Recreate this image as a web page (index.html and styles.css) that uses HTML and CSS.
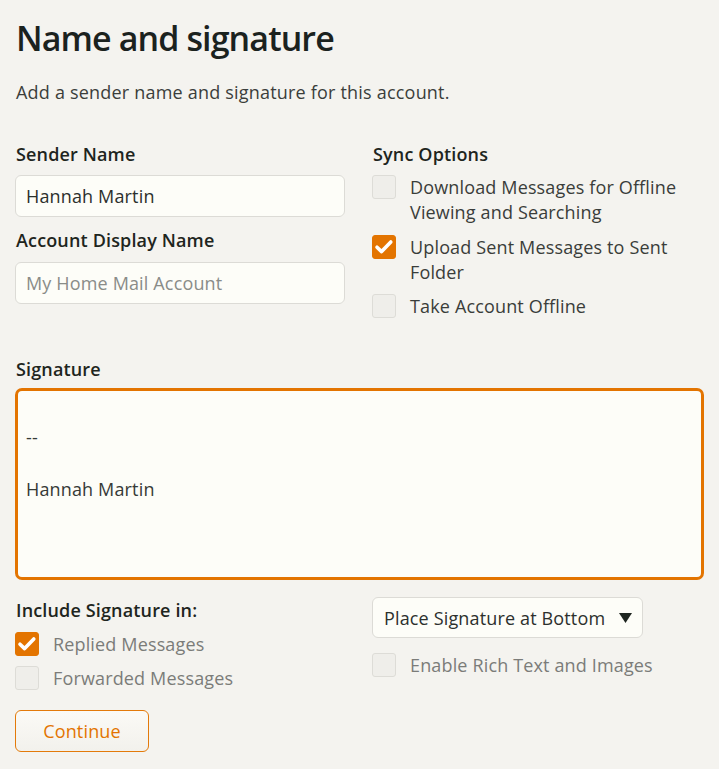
FILE: index.html
```html
<!DOCTYPE html>
<html lang="en">
<head>
<meta charset="utf-8">
<title>Name and signature</title>
<link rel="stylesheet" href="styles.css">
</head>
<body>
<main class="page">
  <h1 class="title">Name and signature</h1>
  <p class="subtitle">Add a sender name and signature for this account.</p>

  <div class="grid top-grid">
    <div class="col">
      <div class="label">Sender Name</div>
      <div class="input">Hannah Martin</div>
      <div class="label label-second">Account Display Name</div>
      <div class="input placeholder">My Home Mail Account</div>
    </div>
    <div class="col">
      <div class="label">Sync Options</div>
      <ul class="checks">
        <li class="check"><span class="box"></span><span class="check-text">Download Messages for Offline Viewing and Searching</span></li>
        <li class="check"><span class="box checked"><svg viewBox="0 0 24 24" width="24" height="24"><path d="M5 12.2 L9.6 16.6 L18.8 7" fill="none" stroke="#fff" stroke-width="3.6" stroke-linecap="round" stroke-linejoin="round"/></svg></span><span class="check-text">Upload Sent Messages to Sent Folder</span></li>
        <li class="check"><span class="box"></span><span class="check-text">Take Account Offline</span></li>
      </ul>
    </div>
  </div>

  <div class="label sig-label">Signature</div>
  <div class="textarea">
    <div class="line">&nbsp;</div>
    <div class="line">--</div>
    <div class="line">&nbsp;</div>
    <div class="line">Hannah Martin</div>
  </div>

  <div class="grid bottom-grid">
    <div class="col">
      <div class="label">Include Signature in:</div>
      <ul class="checks checks-muted">
        <li class="check"><span class="box checked"><svg viewBox="0 0 24 24" width="24" height="24"><path d="M5 12.2 L9.6 16.6 L18.8 7" fill="none" stroke="#fff" stroke-width="3.6" stroke-linecap="round" stroke-linejoin="round"/></svg></span><span class="check-text">Replied Messages</span></li>
        <li class="check"><span class="box"></span><span class="check-text">Forwarded Messages</span></li>
      </ul>
    </div>
    <div class="col">
      <div class="select"><span>Place Signature at Bottom</span><svg class="caret" viewBox="0 0 13 10" width="13" height="10"><path d="M0 0 H13 L6.5 10 Z" fill="#1e2520"/></svg></div>
      <ul class="checks checks-muted checks-rich">
        <li class="check"><span class="box"></span><span class="check-text">Enable Rich Text and Images</span></li>
      </ul>
    </div>
  </div>

  <button class="btn" type="button">Continue</button>
</main>
</body>
</html>
```

FILE: styles.css
```css
* { box-sizing: border-box; }

html, body {
  margin: 0;
  padding: 0;
  background: #f4f3ef;
}

body {
  font-family: "Open Sans", "Noto Sans", sans-serif;
  color: #1e2520;
  font-size: 18px;
  letter-spacing: 0.15px;
}

.page {
  padding: 16px 15px 0 15px;
}

.title {
  margin: 0 0 0 1px;
  font-size: 34px;
  line-height: 44px;
  font-weight: 600;
  letter-spacing: -0.9px;
  color: #1b221e;
}

.subtitle {
  margin: 20px 0 0 1px;
  font-size: 18px;
  line-height: 24px;
  letter-spacing: 0.2px;
  color: #3b3e3b;
}

.grid {
  display: grid;
  grid-template-columns: 330px 330px;
  column-gap: 27px;
  align-items: start;
}

.top-grid {
  margin-top: 38px;
}

.label {
  font-size: 18px;
  line-height: 24px;
  font-weight: 600;
  color: #1e2520;
  margin-left: 1px;
}

.label-second {
  margin-top: 11px;
}

.input {
  margin-top: 9px;
  height: 42px;
  border: 1px solid #dcdbd6;
  border-radius: 6px;
  background: #fdfdf8;
  padding: 0 10px;
  display: flex;
  align-items: center;
  font-size: 18px;
  color: #2c302d;
}

.label-second + .input {
  margin-top: 10px;
}

.placeholder {
  color: #8a8c88;
}

.checks {
  list-style: none;
  margin: 9px 0 0 0;
  padding: 0;
  display: flex;
  flex-direction: column;
  gap: 9.5px;
}

.check {
  display: flex;
  align-items: flex-start;
  gap: 14px;
  line-height: 25px;
  color: #3a3d3a;
}

.box {
  flex: 0 0 24px;
  width: 24px;
  height: 24px;
  border: 1px solid #dddcd7;
  border-radius: 3px;
  background: #efeeea;
  display: block;
}

.box.checked {
  background: #e37400;
  border-color: #e37400;
}

.box svg {
  display: block;
  margin: -1px;
}

.checks-muted .check {
  color: #7b7c79;
  line-height: 24px;
}

.sig-label {
  margin-top: 38px;
}

.textarea {
  margin-top: 7px;
  height: 192px;
  width: 689px;
  border: 3px solid #e37400;
  border-radius: 7px;
  background: #fdfdf8;
  padding: 7px 8px;
  color: #363a37;
  line-height: 26px;
}

.bottom-grid {
  margin-top: 18px;
}

.bottom-grid .checks {
  margin-top: 10px;
  gap: 10px;
}

.select {
  margin-top: -1px;
  width: 271px;
  height: 41px;
  border: 1px solid #dcdbd6;
  border-radius: 6px;
  background: #fdfdf8;
  display: flex;
  align-items: center;
  justify-content: space-between;
  padding: 0 10px 0 11px;
  color: #2c302d;
}

.caret {
  display: block;
}

.bottom-grid .checks-rich {
  margin-top: 15px;
}

.btn {
  margin-top: 20px;
  width: 134px;
  height: 42px;
  border: 1px solid #e37a0a;
  border-radius: 6px;
  background: linear-gradient(#fbfaf6, #f2f1ec);
  color: #e37400;
  font-family: "Open Sans", "Noto Sans", sans-serif;
  font-size: 18px;
  letter-spacing: 0.15px;
  padding: 0;
  cursor: pointer;
}
```
